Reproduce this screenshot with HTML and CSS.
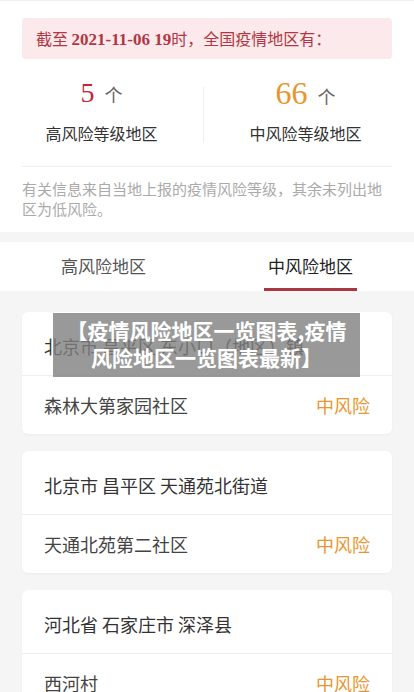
FILE: index.html
```html
<!DOCTYPE html>
<html lang="zh-CN">
<head>
  <meta charset="UTF-8" />
  <meta name="viewport" content="width=device-width, initial-scale=1.0" />
  <title>疫情风险地区一览</title>
  <link rel="stylesheet" href="styles.css">
</head>
<body>
  <div class="summary">
    <div class="notice">截至 <b>2021-11-06 19</b>时，全国疫情地区有：</div>
    <div class="stats">
      <div class="stat">
        <div class="stat-num"><span class="num high">5</span><span class="unit">个</span></div>
        <div class="stat-label">高风险等级地区</div>
      </div>
      <div class="stat-divider"></div>
      <div class="stat stat-right">
        <div class="stat-num"><span class="num mid">66</span><span class="unit">个</span></div>
        <div class="stat-label">中风险等级地区</div>
      </div>
    </div>
    <p class="note">有关信息来自当地上报的疫情风险等级，其余未列出地区为低风险。</p>
  </div>

  <div class="tabs">
    <div class="tab"><span>高风险地区</span></div>
    <div class="tab active"><span>中风险地区</span></div>
  </div>

  <div class="list">
    <div class="card">
      <div class="row">北京市 昌平区 东小口（地区）镇</div>
      <div class="row"><span class="place">森林大第家园社区</span><span class="level">中风险</span></div>
    </div>
    <div class="card">
      <div class="row">北京市 昌平区 天通苑北街道</div>
      <div class="row"><span class="place">天通北苑第二社区</span><span class="level">中风险</span></div>
    </div>
    <div class="card">
      <div class="row">河北省 石家庄市 深泽县</div>
      <div class="row"><span class="place">西河村</span><span class="level">中风险</span></div>
    </div>
  </div>

  <div class="title-overlay">【疫情风险地区一览图表,疫情风险地区一览图表最新】</div>
</body>
</html>
```

FILE: styles.css
```css
body {
  margin: 0;
  background: #f5f5f5;
  font-family: "Noto Sans CJK SC", "Noto Sans", sans-serif;
  color: #333;
  position: relative;
}
.summary {
  background: #fff;
  border-top: 1px solid #eee;
  padding: 17px 22px 13px;
}
.notice {
  height: 41px;
  line-height: 41px;
  padding: 0 14px;
  background: #fbe9eb;
  border-radius: 4px;
  color: #b23645;
  font-size: 16px;
}
.notice b {
  font-family: "Liberation Serif", serif;
  font-size: 17px;
}
.stats {
  display: flex;
  margin: 19px -22px 0;
}
.stat {
  flex: 1;
  text-align: center;
}
.stat-right {
  padding-right: 7px;
}
.stat-divider {
  width: 1px;
  background: #eee;
  margin: 9px 0 1px;
}
.stat-num {
  height: 30px;
  line-height: 30px;
}
.num {
  font-family: "Liberation Serif", serif;
}
.high {
  color: #c0283a;
  font-size: 28px;
}
.mid {
  color: #e8952a;
  font-size: 32px;
}
.unit {
  margin-left: 10px;
  font-size: 18px;
  color: #666;
}
.stat-label {
  margin-top: 14px;
  line-height: 22px;
  font-size: 16px;
  color: #333;
}
.note {
  margin: 22px 0 0;
  padding-top: 12px;
  border-top: 1px solid #eee;
  font-size: 15px;
  line-height: 20px;
  color: #aaa;
}
.tabs {
  display: flex;
  margin-top: 10px;
  background: #fff;
}
.tab {
  flex: 1;
  text-align: center;
  font-size: 17px;
  color: #555;
}
.tab span {
  display: inline-block;
  padding: 12px 4px 10px;
  line-height: 24px;
  border-bottom: 3px solid transparent;
}
.tab.active {
  color: #222;
}
.tab.active span {
  border-bottom-color: #a93540;
}
.list {
  padding-top: 21px;
}
.card {
  margin: 0 22px 17px;
  padding-top: 5px;
  background: #fff;
  border-radius: 6px;
  box-shadow: 0 1px 3px rgba(0, 0, 0, 0.04);
}
.row {
  display: flex;
  justify-content: space-between;
  padding: 17px 22px;
  font-size: 18px;
  line-height: 24px;
  color: #333;
}
.row + .row {
  border-top: 1px solid #eee;
}
.place {
  color: #444;
}
.level {
  color: #e8962e;
}
.title-overlay {
  position: absolute;
  left: 53px;
  top: 313px;
  width: 307px;
  height: 64px;
  box-sizing: border-box;
  padding: 4px 12px 0;
  background: rgba(128, 128, 128, 0.8);
  color: #fff;
  font-weight: bold;
  font-size: 21px;
  line-height: 27px;
  text-align: center;
}
```
